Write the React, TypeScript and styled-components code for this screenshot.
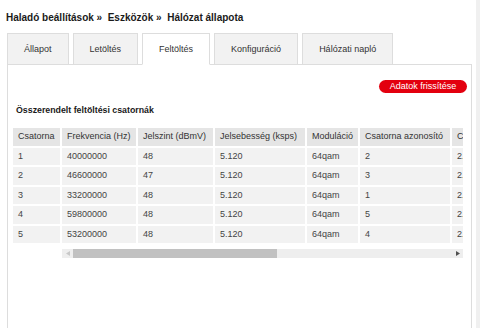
import React from 'react';
import styled, { createGlobalStyle } from 'styled-components';

const GlobalStyle = createGlobalStyle`
  html, body {
    margin: 0;
    padding: 0;
    background: #ffffff;
    font-family: "Liberation Sans", Arial, sans-serif;
    overflow: hidden;
  }
`;

const Page = styled.div`
  display: flex;
  height: 328px;
`;

const Main = styled.div`
  flex: 1;
  display: flex;
  flex-direction: column;
  padding: 0 4px 0 6px;
  min-width: 0;
`;

const Strip = styled.div`
  width: 4px;
  background: #f0f0f0;
`;

const Breadcrumb = styled.div`
  font-size: 10px;
  line-height: 13px;
  font-weight: bold;
  color: #1a1a1a;
  padding-top: 11px;
  white-space: pre;
`;

const TabBar = styled.div`
  display: flex;
  gap: 4px;
  margin: 9px 0 0 1px;
`;

const Tab = styled.div<{ $active?: boolean }>`
  height: 30px;
  padding: 0 16px;
  display: flex;
  align-items: center;
  font-size: 9px;
  color: #333;
  background: ${p => (p.$active ? '#ffffff' : '#f2f2f2')};
  border: 1px solid #dddddd;
  border-bottom: ${p => (p.$active ? '1px solid #ffffff' : '1px solid #dddddd')};
  margin-bottom: -1px;
  position: relative;
  z-index: ${p => (p.$active ? 1 : 0)};
`;

const Panel = styled.div`
  flex: 1;
  margin-left: 1px;
  border: 1px solid #dddddd;
  border-bottom: none;
  padding: 15px 4px 0 5px;
`;

const Toolbar = styled.div`
  display: flex;
  justify-content: flex-end;
`;

const RefreshButton = styled.button`
  height: 13px;
  width: 88px;
  padding: 0;
  border: none;
  border-radius: 7px;
  background: #e3000f;
  color: #ffffff;
  font-family: inherit;
  font-size: 9px;
  line-height: 13px;
`;

const SectionTitle = styled.div`
  font-size: 8.8px;
  font-weight: bold;
  color: #1a1a1a;
  margin: 11px 0 0 3px;
  line-height: 12px;
`;

const TableWrap = styled.div`
  display: flex;
  align-items: flex-start;
  margin-top: 12px;
  width: 450px;
`;

const ScrollArea = styled.div`
  flex: 1;
  min-width: 0;
  display: flex;
  flex-direction: column;
`;

const Clip = styled.div`
  overflow: hidden;
`;

const Table = styled.table`
  border-collapse: separate;
  border-spacing: 0;
  font-size: 9px;
  line-height: 11px;
  white-space: nowrap;
`;

const Th = styled.th<{ $w: number }>`
  width: ${p => p.$w}px;
  min-width: ${p => p.$w}px;
  height: 19.5px;
  padding: 0 0 0 5px;
  box-sizing: border-box;
  text-align: left;
  font-weight: normal;
  color: #333;
  background: #e5e5e5;
  border-right: 2px solid #fff;
  border-bottom: 2px solid #fff;
`;

const Td = styled.td`
  height: 19.5px;
  padding: 0 0 0 5px;
  box-sizing: border-box;
  color: #444;
  background: #f2f2f2;
  border-right: 2px solid #fff;
  border-bottom: 2px solid #fff;
`;

const ScrollBar = styled.div`
  display: flex;
  align-items: center;
  height: 9px;
  margin-top: 4px;
  background: #eeeeee;
`;

const Arrow = styled.div<{ $dir: 'left' | 'right' }>`
  width: 11px;
  height: 9px;
  display: flex;
  justify-content: center;
  align-items: center;
  color: ${p => (p.$dir === 'left' ? '#c8c8c8' : '#505050')};
`;

const Thumb = styled.div`
  width: 204px;
  height: 9px;
  background: #c1c1c1;
`;

const Track = styled.div`
  flex: 1;
`;

const Triangle = ({ dir }: { dir: 'left' | 'right' }) => (
  <svg width="4" height="5" viewBox="0 0 4 5">
    <path d={dir === 'left' ? 'M4 0 L0 2.5 L4 5 Z' : 'M0 0 L4 2.5 L0 5 Z'} fill="currentColor" />
  </svg>
);

const rows = [
  ['1', '40000000', '48', '5.120', '64qam', '2', '2.0'],
  ['2', '46600000', '47', '5.120', '64qam', '3', '2.0'],
  ['3', '33200000', '48', '5.120', '64qam', '1', '2.0'],
  ['4', '59800000', '48', '5.120', '64qam', '5', '2.0'],
  ['5', '53200000', '48', '5.120', '64qam', '4', '2.0'],
];

const cols: [string, number][] = [
  ['Frekvencia (Hz)', 76],
  ['Jelszint (dBmV)', 77],
  ['Jelsebesség (ksps)', 92],
  ['Moduláció', 53],
  ['Csatorna azonosító', 92],
  ['Csatorna típusa', 80],
];

const tabs = ['Állapot', 'Letöltés', 'Feltöltés', 'Konfiguráció', 'Hálózati napló'];

export default function App() {
  return (
    <Page>
      <GlobalStyle />
      <Main>
        <Breadcrumb>{'Haladó beállítások »  Eszközök »  Hálózat állapota'}</Breadcrumb>
        <TabBar>
          {tabs.map(t => (
            <Tab key={t} $active={t === 'Feltöltés'}>
              {t}
            </Tab>
          ))}
        </TabBar>
        <Panel>
          <Toolbar>
            <RefreshButton>Adatok frissítése</RefreshButton>
          </Toolbar>
          <SectionTitle>Összerendelt feltöltési csatornák</SectionTitle>
          <TableWrap>
            <Table>
              <thead>
                <tr>
                  <Th $w={49}>Csatorna</Th>
                </tr>
              </thead>
              <tbody>
                {rows.map(r => (
                  <tr key={r[0]}>
                    <Td>{r[0]}</Td>
                  </tr>
                ))}
              </tbody>
            </Table>
            <ScrollArea>
              <Clip>
                <Table>
                  <thead>
                    <tr>
                      {cols.map(([label, w]) => (
                        <Th key={label} $w={w}>
                          {label}
                        </Th>
                      ))}
                    </tr>
                  </thead>
                  <tbody>
                    {rows.map(r => (
                      <tr key={r[0]}>
                        {r.slice(1).map((v, i) => (
                          <Td key={i}>{v}</Td>
                        ))}
                      </tr>
                    ))}
                  </tbody>
                </Table>
              </Clip>
              <ScrollBar>
                <Arrow $dir="left">
                  <Triangle dir="left" />
                </Arrow>
                <Thumb />
                <Track />
                <Arrow $dir="right">
                  <Triangle dir="right" />
                </Arrow>
              </ScrollBar>
            </ScrollArea>
          </TableWrap>
        </Panel>
      </Main>
      <Strip />
    </Page>
  );
}
